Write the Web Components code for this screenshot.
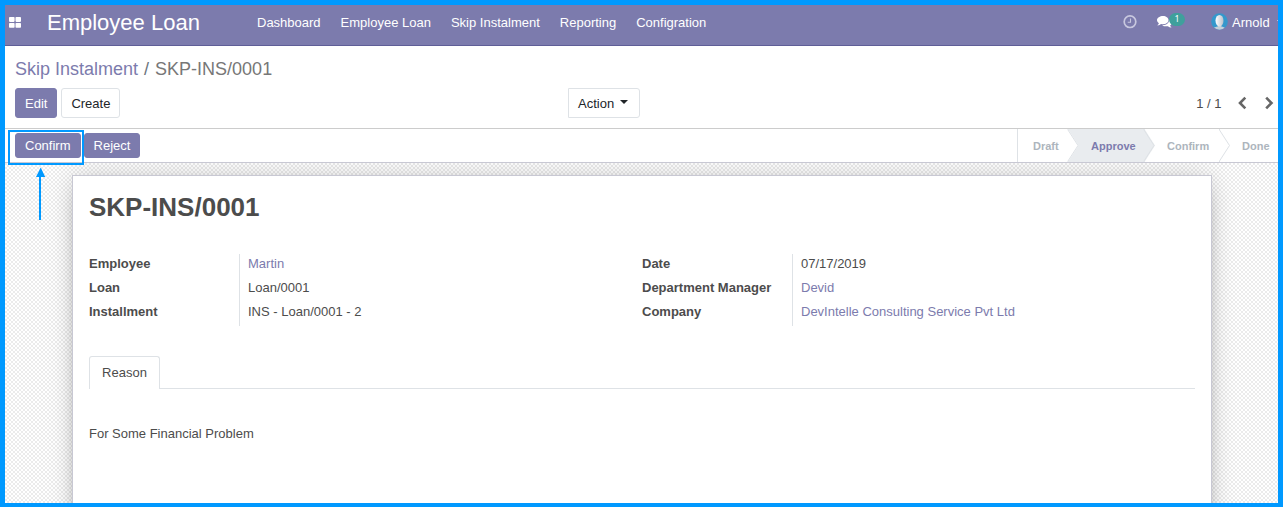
<!DOCTYPE html>
<html lang="en">
<head>
<meta charset="utf-8">
<title>Employee Loan</title>
<style>
html,body{margin:0;height:100%;overflow:hidden}
body{font:13px/18px "Liberation Sans",Arial,sans-serif;color:#4c4c4c}
</style>
</head>
<body>
<loan-app></loan-app>
<script>
function define(name, html) {
  const t = document.createElement('template');
  t.innerHTML = html;
  customElements.define(name, class extends HTMLElement {
    constructor() {
      super();
      this.attachShadow({ mode: 'open' }).append(t.content.cloneNode(true));
    }
  });
}

define('app-button', `<style>
:host{display:block;box-sizing:border-box;height:30px;line-height:30px;padding:0 9px;border:1px solid #dee2e6;border-radius:3px;background:#fff;color:#212529;white-space:nowrap}
:host([primary]){background:#7c7bad;border-color:#7c7bad;color:#fff}
:host([small]){height:25px;line-height:23px}
:host([square]){border-radius:0 3px 3px 0;width:72px}
</style><slot></slot>`);

define('nav-bar', `<style>
:host{display:flex;height:40px;background:#7c7bad;border-bottom:1px solid #5f5e97;color:#fff;box-sizing:content-box;white-space:nowrap;overflow:hidden}
.apps{flex:none;width:12px;height:11px;margin:12px 0 0 4px}
.brand{flex:none;width:210px;margin-left:26px;font-size:22px;line-height:35px}
nav{display:flex;gap:20px;line-height:35px;flex:1}
.clock{flex:none;margin:10px 20px 0 0}
.chat{flex:none;margin-top:10px}
.badge{height:13px;width:16px;border-radius:7px;background:#3fa09c;font:9px/12px "Noto Sans","DejaVu Sans",sans-serif;text-align:center;margin:8px 26px 0 -3px}
.avatar{flex:none;margin:8px 4px 0 0}
.user{line-height:35px}
.caret{flex:none;width:0;height:0;border:4px solid transparent;border-top-color:#fff;border-bottom:0;margin:15px -6.700px 0 7px}
</style>
<svg class="apps" viewBox="0 0 12 11"><g fill="#fff"><rect width="5.6" height="4.9" rx=".8"/><rect x="6.5" width="5.5" height="4.9" rx=".8"/><rect y="5.9" width="5.6" height="4.9" rx=".8"/><rect x="6.5" y="5.9" width="5.5" height="4.9" rx=".8"/></g></svg>
<div class="brand">Employee Loan</div>
<nav><span>Dashboard</span><span>Employee Loan</span><span>Skip Instalment</span><span>Reporting</span><span>Configration</span></nav>
<svg class="clock" width="14" height="14" viewBox="0 0 14 14" fill="none" stroke="#c8c8df"><circle cx="7" cy="6.7" r="5.8" stroke-width="1.7"/><path d="M7.5 3.500V7.200H4.700" stroke-width="1.1"/></svg>
<svg class="chat" width="15" height="14" viewBox="0 0 15 14" fill="#fff"><path d="M6 .9C9 .9 11.500 2.600 11.500 5S9 9.200 6 9.200c-.7 0-1.300-.1-1.900-.2C3 9.900 1.900 10.300.8 10.400c-.3 0-.4-.3-.2-.5.7-.6 1.100-1 1.300-1.700C.7 7.400 0 6.300 0 5 0 2.600 3 .9 6 .9z"/><path d="M12.300 4.100c1.500.7 2.600 1.800 2.600 3.300 0 1.200-.7 2.300-1.800 3 .2.700.6 1.200 1.200 1.600.2.200.1.500-.2.500-1.200-.1-2.200-.5-3.200-1.300-2.100.4-4.300.1-5.800-1 4.300.2 7.300-2 7.200-6.100z"/></svg>
<span class="badge">1</span>
<svg class="avatar" width="17" height="17" viewBox="0 0 17 17"><defs><clipPath id="c"><circle cx="8.500" cy="8.500" r="8.300"/></clipPath><linearGradient id="g"><stop stop-color="#fff"/><stop offset="1" stop-color="#b9c1ca"/></linearGradient></defs><g clip-path="url(#c)"><path fill="#3498cc" d="M0 0h17v17H0z"/><path d="M6.800 11h3.500v2.500c2 .4 3.300 1 4 1.800V17h-12v-1.700c.8-.8 2.300-1.400 4.500-1.800z" fill="#c5d0da"/><ellipse cx="8.500" cy="7.700" rx="4" ry="5.800" fill="url(#g)"/></g></svg>
<span class="user">Arnold</span><i class="caret"></i>`);

define('control-panel', `<style>
:host{display:flex;flex-direction:column;height:82px;border-bottom:1px solid #ccc;background:#fff}
.crumb{font-size:18px;line-height:22px;margin:12px 0 0 10px;color:#777;white-space:pre}
.crumb a{color:#7c7bad}.crumb i{font-style:normal;color:#6c757d;margin:0 6px 0 6px}
.row{display:grid;grid-template-columns:553px 1fr auto;margin:8px 4px 0 10px}
.btns{display:flex;gap:4px}
.mid{display:flex}
.caret{display:inline-block;border:4px solid transparent;border-top-color:#212529;border-bottom:0;margin:0 0 6px 6px;vertical-align:middle}
.pager{display:flex;line-height:32px}
.pager svg{margin-top:8px}
</style>
<div class="crumb"><a>Skip Instalment</a><i>/</i><span>SKP-INS/0001</span></div>
<div class="row"><div class="btns"><app-button primary>Edit</app-button><app-button>Create</app-button></div>
<div class="mid"><app-button square>Action<i class="caret"></i></app-button></div>
<div class="pager"><span>1 / 1</span>
<svg style="margin-left:15px" width="10" height="14" viewBox="0 0 10 14" fill="none" stroke="#666" stroke-width="2.600"><path d="M8.300 1.700 3 7l5.300 5.300"/></svg>
<svg style="margin-left:17.500px" width="10" height="14" viewBox="0 0 10 14" fill="none" stroke="#666" stroke-width="2.600"><path d="M2.200 1.700 7.500 7l-5.300 5.300"/></svg></div></div>`);

define('status-bar', `<style>
:host{display:flex;justify-content:space-between;height:33px;border-bottom:1px solid #c8c8d3;background:#fff;position:relative}
.btns{display:flex;gap:3px;padding:4px 0 0 10px}
.steps{display:grid;grid-template-columns:50px 76px 75px 59px;height:33px;border-left:1px solid #dee2e6;font:bold 11px/34px "Liberation Sans",Arial,sans-serif;color:#adb5bd;width:260px;position:relative}
.steps svg{position:absolute;left:0;top:0}
.steps span{position:relative;padding-left:15px;white-space:nowrap}
.steps span+span{padding-left:23px}
.steps .on{color:#7c7bad}
</style>
<div class="btns"><app-button primary small>Confirm</app-button><app-button primary small>Reject</app-button></div>
<div class="steps"><svg width="260" height="33" viewBox="0 0 260 33"><path d="M50 0h76.500L137 16.500 126.500 33H50l10.500-16.500z" fill="#e9ecef"/><path d="M50 0v1l10 15.500L50 32v1M126 0v1l10 15.500L126 32v1M201.500 0v1l10 15.500-10 15.500v1" fill="none" stroke="#dee2e6"/></svg>
<span>Draft</span><span class="on">Approve</span><span>Confirm</span><span>Done</span></div>`);

define('field-row', `<style>
:host{display:grid;grid-template-columns:151px 1fr;height:24px;line-height:20px}
.l{font-weight:bold;border-right:1px solid #dee2e6}
.v{padding-left:8px}
:host([link]) .v{color:#7c7bad}
</style><div class="l"><slot name="label"></slot></div><div class="v"><slot></slot></div>`);

define('form-sheet', `<style>
:host{display:block;box-sizing:border-box;width:1140px;height:400px;margin:12px auto 0 67px;padding:0 16px;border:1px solid #c8c8d3;background:#fff;box-shadow:0 5px 20px -15px #000,0 0 24px rgba(0,0,0,.14)}
h1{margin:0;padding-top:14px;font-size:26px;line-height:34px}
.groups{display:grid;grid-template-columns:553px 553px;margin-top:30px}
.tabs{display:flex;margin-top:30px;height:33px}
.tab{box-sizing:border-box;width:71px;border:1px solid #dee2e6;border-bottom:0;border-radius:3px 3px 0 0;line-height:32px;text-align:center}
.rest{flex:1;border-bottom:1px solid #dee2e6;height:32px}
p{margin:36px 0 0}
</style>
<h1>SKP-INS/0001</h1>
<div class="groups"><div>
<field-row link><span slot="label">Employee</span>Martin</field-row>
<field-row><span slot="label">Loan</span>Loan/0001</field-row>
<field-row><span slot="label">Installment</span>INS - Loan/0001 - 2</field-row></div><div>
<field-row><span slot="label">Date</span>07/17/2019</field-row>
<field-row link><span slot="label">Department Manager</span>Devid</field-row>
<field-row link><span slot="label">Company</span>DevIntelle Consulting Service Pvt Ltd</field-row></div></div>
<div class="tabs"><div class="tab">Reason</div><div class="rest"></div></div>
<p>For Some Financial Problem</p>`);

define('callout-mark', `<style>
:host{position:absolute;left:8px;top:130px;width:76px;height:90px}
.box{box-sizing:border-box;width:76px;height:35px;border:2px solid #09f}
svg{display:block;margin-top:2px}
</style><div class="box"></div><svg width="76" height="53" fill="#09f"><path d="M32.700.5 37.200 10H33v43h-2V10h-3z"/></svg>`);

define('loan-app', `<style>
:host{display:flex;flex-direction:column;box-sizing:border-box;width:1283px;height:507px;border:5px solid #09f;border-bottom-width:4px;overflow:hidden;background:#fff}
main{flex:1;min-height:0;overflow:hidden;background:repeating-conic-gradient(#fff 0 25%,#ebebeb 0 50%) 0 0/4px 4px}
nav-bar,control-panel,status-bar{flex:none}
</style><nav-bar></nav-bar><control-panel></control-panel><status-bar></status-bar><main><form-sheet></form-sheet></main><callout-mark></callout-mark>`);
</script>
</body>
</html>
